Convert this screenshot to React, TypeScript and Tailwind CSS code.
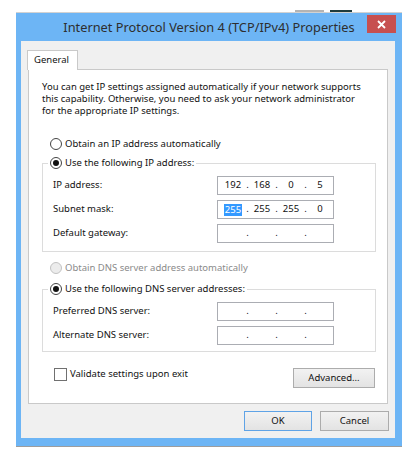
import React from 'react';

const font = { fontFamily: '"Noto Sans", "Open Sans", sans-serif' };

const Radio = ({ checked = false, disabled = false }: { checked?: boolean; disabled?: boolean }) => (
  <span
    className={
      disabled
        ? 'w-[12px] h-[12px] rounded-full border border-[#c2c2c2] bg-[#ececec] shrink-0'
        : 'w-[12px] h-[12px] rounded-full border border-[#444] bg-white flex items-center justify-center shrink-0'
    }
  >
    {checked && <span className="w-[6px] h-[6px] rounded-full bg-[#111]" />}
  </span>
);

const IpField = ({ values, selectFirst = false }: { values?: string[]; selectFirst?: boolean }) => {
  const segs = values ?? ['', '', '', ''];
  return (
    <div className="w-[117px] h-[19px] border border-[#abadb3] bg-white flex items-center pl-[3px] text-[#111]">
      {segs.map((v, i) => (
        <React.Fragment key={i}>
          <span className="w-[24px] flex justify-center">
            {i === 0 && selectFirst ? (
              <span className="bg-[#3399ff] text-white px-[1px] leading-[12px]">{v}</span>
            ) : (
              v
            )}
          </span>
          {i < 3 && <span className="w-[5px] flex justify-center">.</span>}
        </React.Fragment>
      ))}
    </div>
  );
};

const Button = ({ label, primary = false, w }: { label: string; primary?: boolean; w: string }) => (
  <div
    className={`${w} h-[20px] flex items-center justify-center bg-gradient-to-b from-[#f2f2f2] to-[#e3e3e3] text-[#111] border ${
      primary ? 'border-[#5fa3e6]' : 'border-[#acacac]'
    }`}
  >
    {label}
  </div>
);

export default function App() {
  return (
    <div className="w-[413px] h-[475px] bg-white pt-[10px] text-[9.5px]" style={font}>
      {/* other windows peeking behind */}
      <div className="h-[2px] flex">
        <div className="ml-[295px] w-[29px] bg-[#b4b4b4]" />
        <div className="ml-[6px] w-[22px] bg-[#1f3b3d]" />
      </div>

      {/* Window */}
      <div className="ml-[16px] w-[386px] bg-[#6db5f5] border-t border-b border-t-[#d2d2d2] border-b-[#9d9d9d] pb-[8px]">
        {/* Title bar */}
        <div className="h-[28px] grid grid-cols-[1fr_auto_1fr] items-start">
          <div />
          <div className="pt-[5px] text-[12.8px] text-[#2e2e2e] leading-[18px]">
            Internet Protocol Version 4 (TCP/IPv4) Properties
          </div>
          <div className="flex justify-end pt-[2px] pr-[6px]">
            <div className="w-[29px] h-[18px] bg-[#c75050] flex items-center justify-center">
              <svg width="9" height="9" viewBox="0 0 9 9">
                <path d="M1 1L8 8M8 1L1 8" stroke="white" strokeWidth="1.8" />
              </svg>
            </div>
          </div>
        </div>

        {/* Client area */}
        <div className="ml-[5px] mr-[7px] bg-[#f0f0f0] pt-[9px] px-[7px] pb-[7px]">
          {/* Tab */}
          <div className="relative z-10 -ml-[1px] -mb-[1px] w-[51px] h-[20px] bg-white border-t border-l border-r border-[#c9c9c9] flex items-center pl-[6px] text-[#111]">
            General
          </div>

          {/* Tab panel */}
          <div className="h-[335px] bg-white border border-[#c9c9c9] pl-[13px] pr-[11px] pt-[11px] text-[#111]">
            <p className="leading-[12px]">
              You can get IP settings assigned automatically if your network supports
              <br />
              this capability. Otherwise, you need to ask your network administrator
              <br />
              for the appropriate IP settings.
            </p>

            <div className="mt-[20px] ml-[8px] h-[14px] flex items-center gap-[3px]">
              <Radio />
              <span>Obtain an IP address automatically</span>
            </div>

            <fieldset className="mt-[5px] border border-[#dcdcdc] pl-0">
              <legend className="ml-[5px] px-[2px] h-[14px] flex items-center gap-[3px]">
                <Radio checked />
                <span>Use the following IP address:</span>
              </legend>
              <div className="grid grid-cols-[164px_117px] gap-y-[5px] items-center pl-[10px] pt-[6px] pb-[8px]">
                <span>IP address:</span>
                <IpField values={['192', '168', '0', '5']} />
                <span>Subnet mask:</span>
                <IpField values={['255', '255', '255', '0']} selectFirst />
                <span>Default gateway:</span>
                <IpField />
              </div>
            </fieldset>

            <div className="mt-[9px] ml-[8px] h-[14px] flex items-center gap-[3px] text-[#8a8a8a]">
              <Radio disabled />
              <span>Obtain DNS server address automatically</span>
            </div>

            <fieldset className="mt-[7px] border border-[#dcdcdc] pl-0">
              <legend className="ml-[5px] px-[2px] h-[14px] flex items-center gap-[3px]">
                <Radio checked />
                <span>Use the following DNS server addresses:</span>
              </legend>
              <div className="grid grid-cols-[164px_117px] gap-y-[5px] items-center pl-[10px] pt-[6px] pb-[6px]">
                <span>Preferred DNS server:</span>
                <IpField />
                <span>Alternate DNS server:</span>
                <IpField />
              </div>
            </fieldset>

            <div className="mt-[16px] flex justify-between items-start">
              <div className="ml-[12px] h-[13px] flex items-center gap-[3px]">
                <span className="w-[13px] h-[13px] border border-[#707070] bg-white" />
                <span>Validate settings upon exit</span>
              </div>
              <div className="mr-[1px]">
                <Button label="Advanced..." w="w-[82px]" />
              </div>
            </div>
          </div>

          {/* Footer buttons */}
          <div className="mt-[7px] -mr-[1px] flex justify-end gap-[8px]">
            <Button label="OK" primary w="w-[68px]" />
            <Button label="Cancel" w="w-[69px]" />
          </div>
        </div>
      </div>
    </div>
  );
}
